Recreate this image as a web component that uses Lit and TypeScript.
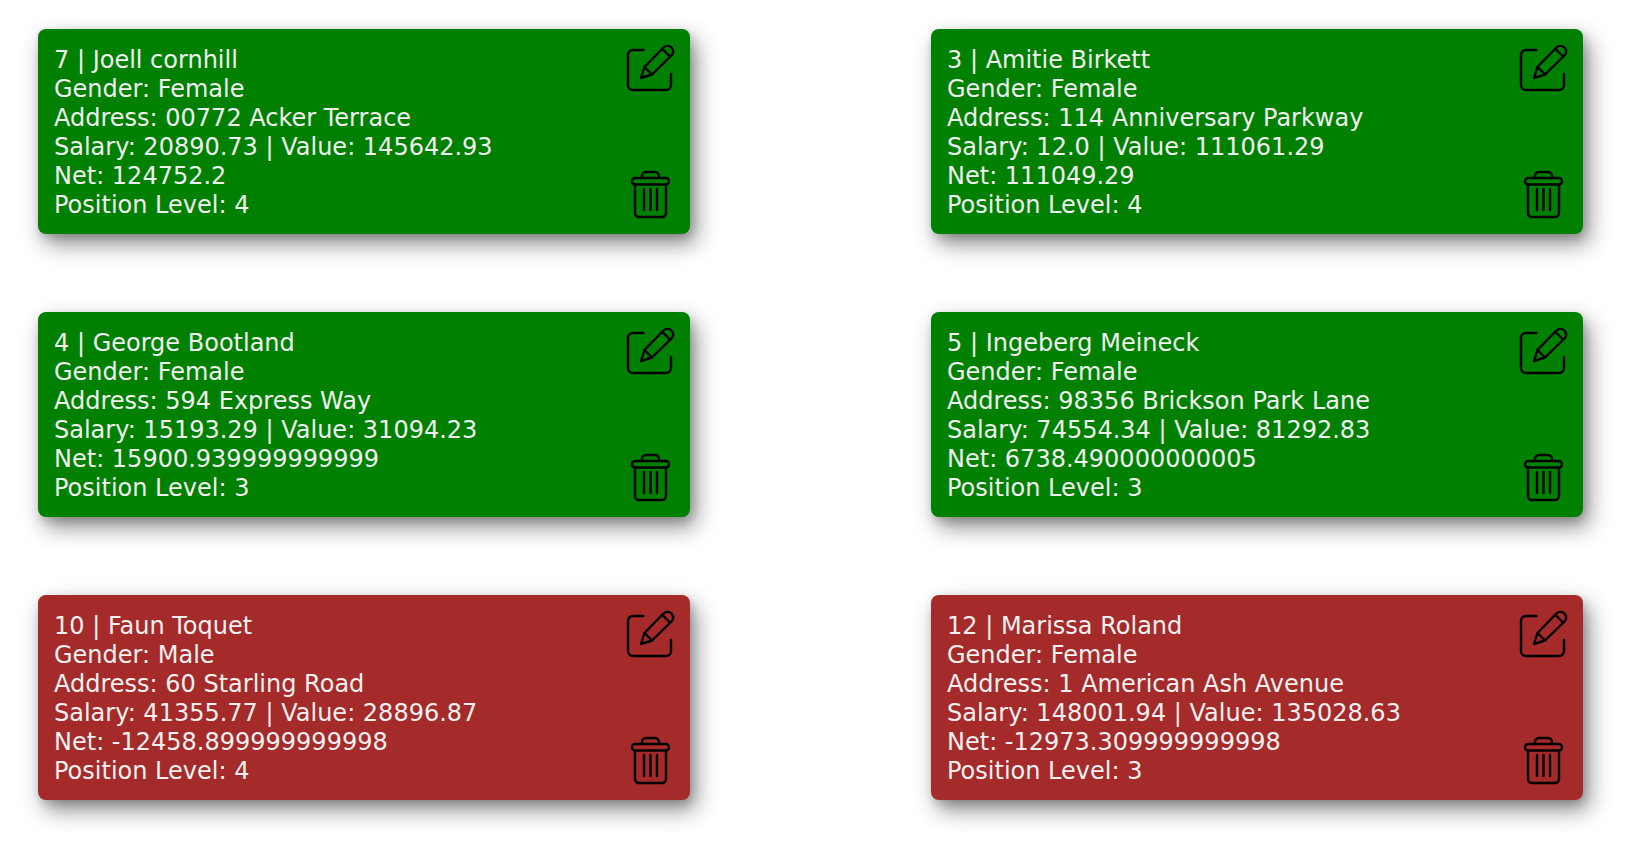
import { LitElement, html, css } from "lit";
import { customElement, property } from "lit/decorators.js";

interface Employee {
  id: number;
  name: string;
  gender: string;
  address: string;
  salary: string;
  value: string;
  net: string;
  level: number;
}

const employees: Employee[] = [
  { id: 7, name: "Joell cornhill", gender: "Female", address: "00772 Acker Terrace", salary: "20890.73", value: "145642.93", net: "124752.2", level: 4 },
  { id: 3, name: "Amitie Birkett", gender: "Female", address: "114 Anniversary Parkway", salary: "12.0", value: "111061.29", net: "111049.29", level: 4 },
  { id: 4, name: "George Bootland", gender: "Female", address: "594 Express Way", salary: "15193.29", value: "31094.23", net: "15900.939999999999", level: 3 },
  { id: 5, name: "Ingeberg Meineck", gender: "Female", address: "98356 Brickson Park Lane", salary: "74554.34", value: "81292.83", net: "6738.490000000005", level: 3 },
  { id: 10, name: "Faun Toquet", gender: "Male", address: "60 Starling Road", salary: "41355.77", value: "28896.87", net: "-12458.899999999998", level: 4 },
  { id: 12, name: "Marissa Roland", gender: "Female", address: "1 American Ash Avenue", salary: "148001.94", value: "135028.63", net: "-12973.309999999998", level: 3 },
];

@customElement("employee-card")
class EmployeeCard extends LitElement {
  @property({ attribute: false }) employee!: Employee;

  static styles = css`
    :host {
      display: block;
    }
    .card {
      display: flex;
      justify-content: space-between;
      padding: 17px 16px 14px;
      border-radius: 8px;
      background: green;
      color: #f0f0f0;
      box-shadow:
        2px 4px 8px rgba(0, 0, 0, 0.15),
        6px 10px 22px rgba(0, 0, 0, 0.45);
    }
    .loss {
      background: brown;
    }
    .details p {
      margin: 0;
      font-size: 24px;
      line-height: 29px;
    }
    .actions {
      display: flex;
      flex-direction: column;
      justify-content: space-between;
    }
    .action {
      display: block;
      padding: 0;
      border: 0;
      background: none;
      color: #000;
      cursor: pointer;
    }
    .icon {
      display: block;
      width: 48px;
      height: 48px;
      overflow: visible;
      fill: none;
      stroke: currentColor;
      stroke-width: 2.4;
      stroke-linecap: round;
      stroke-linejoin: round;
    }
  `;

  render() {
    const e = this.employee;
    return html`
      <article class="card ${e.net.startsWith("-") ? "loss" : ""}">
        <div class="details">
          <p>${e.id} | ${e.name}</p>
          <p>Gender: ${e.gender}</p>
          <p>Address: ${e.address}</p>
          <p>Salary: ${e.salary} | Value: ${e.value}</p>
          <p>Net: ${e.net}</p>
          <p>Position Level: ${e.level}</p>
        </div>
        <div class="actions">
          <button class="action" type="button" aria-label="Edit">
            <svg class="icon" viewBox="0 2 48 48" aria-hidden="true">
              <path d="M17.500 6H7a5 5 0 0 0-5 5V41a5 5 0 0 0 5 5H40a5 5 0 0 0 5-5V30" />
              <path d="M15 34L18.500 23L37.500 3.500a5.500 5.500 0 0 1 8 8L26 30.500Z" />
              <path d="M18.500 23L26 30.500M36.500 5L44 12.500" />
            </svg>
          </button>
          <button class="action" type="button" aria-label="Delete">
            <svg class="icon" viewBox="0 1 48 48" aria-hidden="true">
              <rect x="6" y="7" width="37" height="6.500" rx="3.250" />
              <path d="M16 7V5a4 4 0 0 1 4-4H29a4 4 0 0 1 4 4V7" />
              <path d="M9 14V42a4 4 0 0 0 4 4H36a4 4 0 0 0 4-4V14" />
              <path d="M18 18V39M24.500 18V39M31 18V39" />
            </svg>
          </button>
        </div>
      </article>
    `;
  }
}

@customElement("app-root")
class AppRoot extends LitElement {
  static styles = css`
    :host {
      display: block;
      font-family: Verdana, "DejaVu Sans", sans-serif;
    }
    .list {
      display: grid;
      grid-template-columns: 1fr 1fr;
      gap: 78px 241px;
      padding: 29px 58px 40px 38px;
    }
  `;

  render() {
    return html`
      <main class="list">
        ${employees.map((e) => html`<employee-card .employee=${e}></employee-card>`)}
      </main>
    `;
  }
}
